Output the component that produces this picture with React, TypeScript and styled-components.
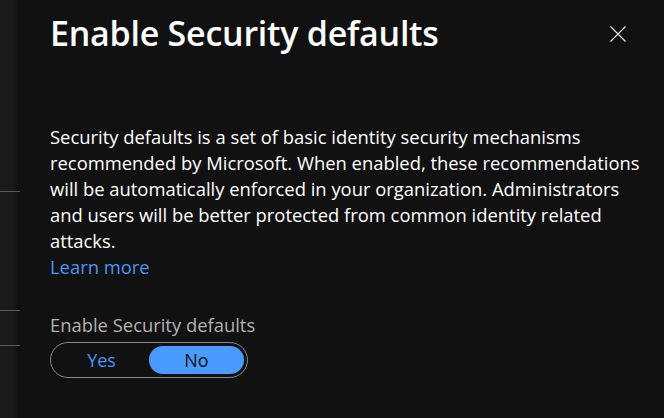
import React, { useState } from "react";
import styled, { createGlobalStyle } from "styled-components";

const GlobalStyle = createGlobalStyle`
  html, body {
    margin: 0;
    padding: 0;
    background: #1a1a1a;
  }
  body {
    font-family: "Open Sans", "Noto Sans", sans-serif;
  }
`;

const Page = styled.div`
  display: flex;
  width: 664px;
  height: 418px;
  overflow: hidden;
`;

const Behind = styled.div`
  width: 20px;
  flex: none;
  display: flex;
  flex-direction: column;
  background: linear-gradient(to right, #1a1a1a 0, #1a1a1a 12px, #0e0e0e 20px);
`;

const Rule = styled.div<{ $top: number }>`
  margin-top: ${(p) => p.$top}px;
  height: 1px;
  background: #5a5a5a;
`;

const Panel = styled.section`
  flex: 1;
  min-width: 0;
  background: #111111;
  padding: 12px 38px 0 30px;
  color: #ffffff;
`;

const Header = styled.header`
  display: flex;
  align-items: flex-start;
  justify-content: space-between;
  height: 44px;
`;

const Title = styled.h1`
  margin: 0;
  font-size: 34px;
  font-weight: 600;
  line-height: 42px;
  letter-spacing: -0.25px;
`;

const CloseButton = styled.button`
  margin-top: 14px;
  width: 16px;
  height: 16px;
  padding: 0;
  border: none;
  background: none;
  cursor: pointer;
  display: flex;
`;

const Description = styled.p`
  margin: 68px 0 0;
  font-size: 18.4px;
  line-height: 26px;
  white-space: nowrap;
`;

const LearnMore = styled.a`
  display: block;
  font-size: 18.4px;
  line-height: 26px;
  color: #4c94f5;
  text-decoration: none;
`;

const FieldLabel = styled.div`
  margin-top: 33px;
  font-size: 18.4px;
  line-height: 24px;
  color: #b3b3b3;
`;

const Toggle = styled.div`
  margin-top: 5px;
  display: flex;
  box-sizing: border-box;
  width: 198px;
  height: 36px;
  padding: 3px;
  border: 1px solid #8a8a8a;
  border-radius: 18px;
`;

const Option = styled.button<{ $active: boolean }>`
  flex: 1;
  border: none;
  border-radius: 14px;
  font-family: inherit;
  font-size: 18px;
  padding: 0;
  cursor: pointer;
  background: ${(p) => (p.$active ? "#4a9bff" : "transparent")};
  color: ${(p) => (p.$active ? "#111111" : "#4c94f5")};
`;

const lines = [
  "Security defaults is a set of basic identity security mechanisms",
  "recommended by Microsoft. When enabled, these recommendations",
  "will be automatically enforced in your organization. Administrators",
  "and users will be better protected from common identity related",
  "attacks.",
];

export default function App() {
  const [enabled, setEnabled] = useState(false);

  return (
    <>
      <GlobalStyle />
      <Page>
        <Behind>
          <Rule $top={191} />
          <Rule $top={118} />
          <Rule $top={34} />
        </Behind>
        <Panel>
          <Header>
            <Title>Enable Security defaults</Title>
            <CloseButton aria-label="Close">
              <svg width="16" height="16" viewBox="0 0 16 16">
                <path d="M0.5 0.5 L15.5 15.5 M15.5 0.5 L0.5 15.5" stroke="#e6e6e6" strokeWidth="1.2" fill="none" />
              </svg>
            </CloseButton>
          </Header>
          <Description>
            {lines.map((l, i) => (
              <React.Fragment key={i}>
                {l}
                {i < lines.length - 1 && <br />}
              </React.Fragment>
            ))}
          </Description>
          <LearnMore href="#">Learn more</LearnMore>
          <FieldLabel>Enable Security defaults</FieldLabel>
          <Toggle>
            <Option $active={enabled} onClick={() => setEnabled(true)}>Yes</Option>
            <Option $active={!enabled} onClick={() => setEnabled(false)}>No</Option>
          </Toggle>
        </Panel>
      </Page>
    </>
  );
}
